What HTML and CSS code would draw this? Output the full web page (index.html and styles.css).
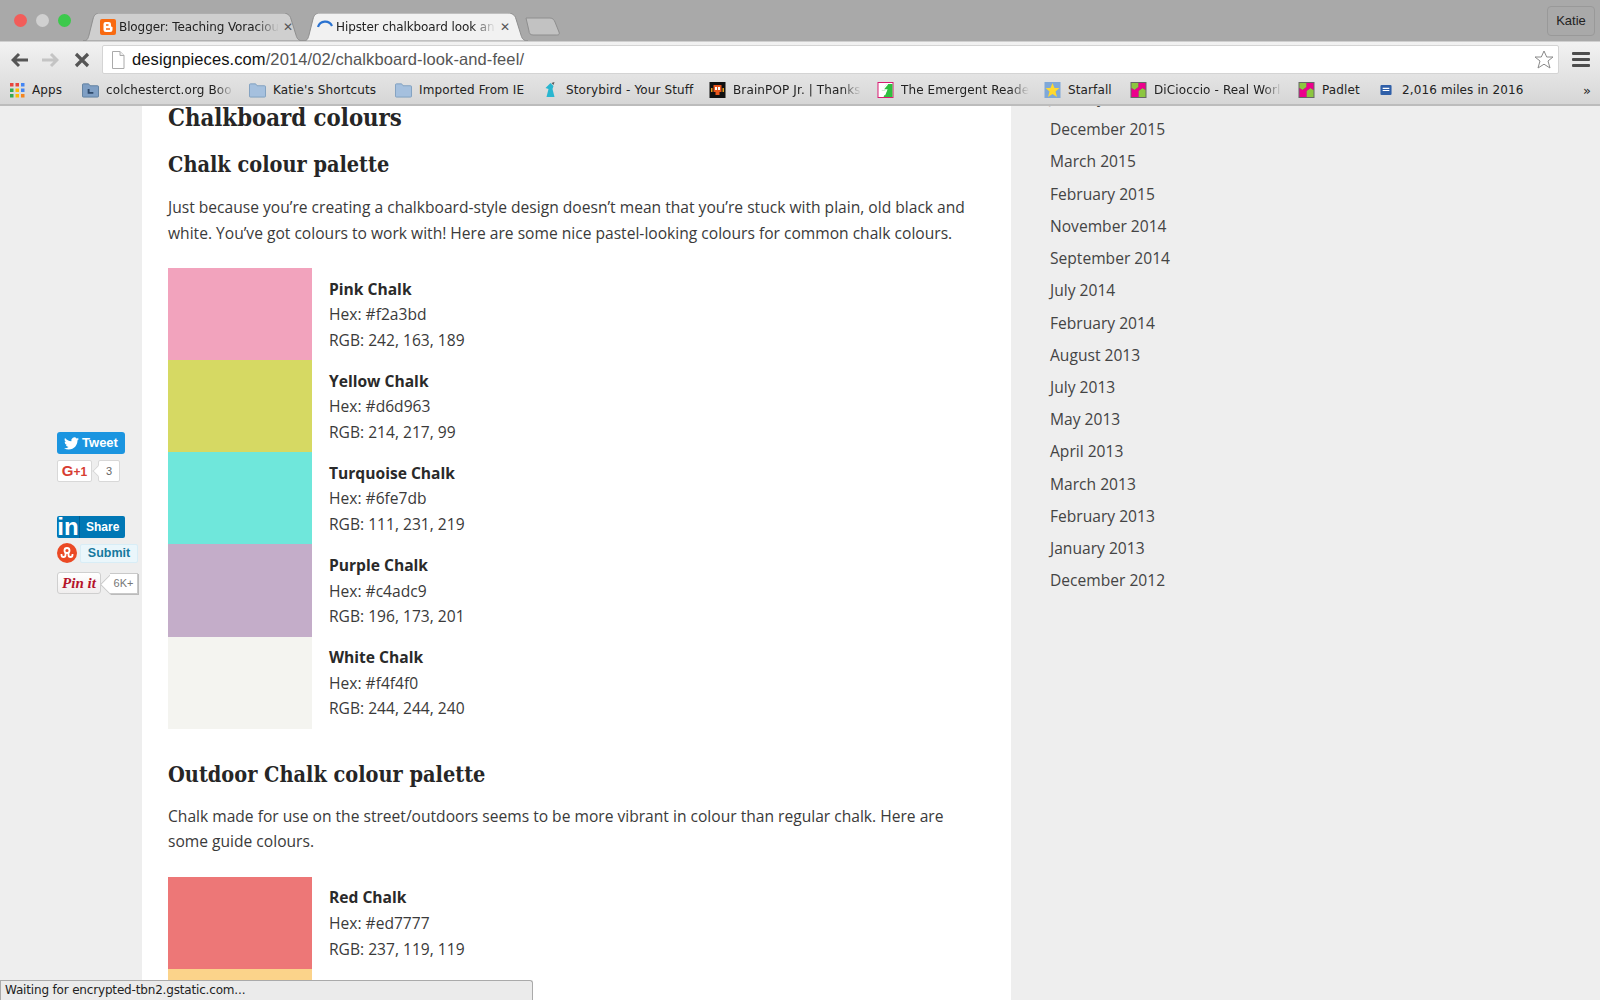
FILE: index.html
```html
<!DOCTYPE html>
<html lang="en">
<head>
<meta charset="utf-8">
<title>Hipster chalkboard look and feel</title>
<link rel="stylesheet" href="styles.css">
</head>
<body>
<header class="chrome">
  <div class="tabstrip">
    <div class="lights"><i class="light red"></i><i class="light grey"></i><i class="light green"></i></div>
    <div class="tab tab-back">
      <svg class="tab-shape" viewBox="0 0 220 28"><path d="M0 28C4 28 5 26 6 22L10 6C11 2 13 0 17 0H200C204 0 207 2 208 6L213 22C214 26 216 28 220 28Z"/></svg>
      <svg class="fav" viewBox="0 0 16 16"><rect width="16" height="16" rx="2" fill="#f96a10"/><path d="M5.500 3H9A2.200 2.200 0 0 1 11 5.500V6.500A1.500 1.500 0 0 0 12.500 8V10.500A2.500 2.500 0 0 1 10 13H6A2.500 2.500 0 0 1 3.500 10.500V5A2 2 0 0 1 5.500 3Z" fill="#fff"/><path d="M6 6H8.500M6 10H10" stroke="#f96a10" stroke-width="1.300"/></svg>
      <span class="tab-title">Blogger: Teaching Voraciou</span>
      <span class="tab-x">✕</span>
    </div>
    <div class="tab tab-active">
      <svg class="tab-shape" viewBox="0 0 225 28"><path d="M0 28C4 28 5 26 6 22L10 6C11 2 13 0 17 0H205C209 0 212 2 213 6L218 22C219 26 221 28 225 28Z"/></svg>
      <svg class="fav" viewBox="0 0 16 16"><path d="M1 8A7.500 7.500 0 0 1 15 7" fill="none" stroke="#2a72d0" stroke-width="2.200"/></svg>
      <span class="tab-title">Hipster chalkboard look an</span>
      <span class="tab-x">✕</span>
    </div>
    <svg class="newtab" viewBox="0 0 35 19"><path d="M1 1H25C28 1 29 3 30 5L34 15C35 18 33 18 31 18H8C5 18 4 16 4 14Z"/></svg>
    <div class="profile">Katie</div>
  </div>
  <div class="toolbar">
    <svg class="nav nav-back" viewBox="0 0 18 16"><path d="M8 2L2 8L8 14M2 8H17" fill="none" stroke="#555" stroke-width="3"/></svg>
    <svg class="nav nav-fwd" viewBox="0 0 18 16"><path d="M10 2L16 8L10 14M16 8H1" fill="none" stroke="#c4c4c4" stroke-width="3"/></svg>
    <svg class="nav nav-stop" viewBox="0 0 16 16"><path d="M2 2L14 14M14 2L2 14" fill="none" stroke="#555" stroke-width="3.200"/></svg>
    <div class="omnibox">
      <svg class="docicon" viewBox="0 0 14 18"><path d="M1.500 .5H9L13 4.500V17.500H1.500Z" fill="#fff" stroke="#aaa"/><path d="M9 .5V4.500H13" fill="#eee" stroke="#aaa"/></svg>
      <span class="url"><b class="host">designpieces.com</b>/2014/02/chalkboard-look-and-feel/</span>
      <svg class="star" viewBox="0 0 20 19"><path d="M10 1L12.700 7H19L14 11L16 18L10 14.200L4 18L6 11L1 7H7.300Z" fill="#fff" stroke="#8a8a8a"/></svg>
    </div>
    <div class="menu"><i></i><i></i><i></i></div>
  </div>
  <div class="bookmarks">
    <div class="bm bm-apps"><svg class="bm-icon" viewBox="0 0 15 15"><g><rect width="3.500" height="3.500" fill="#e8453c"/><rect x="5.500" width="3.500" height="3.500" fill="#e8453c"/><rect x="11" width="3.500" height="3.500" fill="#4285f4"/><rect y="5.500" width="3.500" height="3.500" fill="#34a853"/><rect x="5.500" y="5.500" width="3.500" height="3.500" fill="#fbbc05"/><rect x="11" y="5.500" width="3.500" height="3.500" fill="#4285f4"/><rect y="11" width="3.500" height="3.500" fill="#34a853"/><rect x="5.500" y="11" width="3.500" height="3.500" fill="#fbbc05"/><rect x="11" y="11" width="3.500" height="3.500" fill="#f4851f"/></g></svg><span>Apps</span></div>
    <div class="bm"><svg class="bm-icon" viewBox="0 0 18 16"><path d="M.5 2.500A1 1 0 0 1 1.500 1.500H7L8.500 3.500H16.500A1 1 0 0 1 17.500 4.500V14.500A1 1 0 0 1 16.500 15.500H1.500A1 1 0 0 1 .5 14.500Z" fill="#7f9fc4" stroke="#5f7f9f"/><path d="M6 7H8V10H12V12H6Z" fill="#2f4a6b"/></svg><span class="fade">colchesterct.org Boo</span></div>
    <div class="bm"><svg class="bm-icon" viewBox="0 0 18 16"><path d="M.5 2.500A1 1 0 0 1 1.500 1.500H7L8.500 3.500H16.500A1 1 0 0 1 17.500 4.500V14.500A1 1 0 0 1 16.500 15.500H1.500A1 1 0 0 1 .5 14.500Z" fill="#a5c0de" stroke="#7f9fbf"/></svg><span>Katie's Shortcuts</span></div>
    <div class="bm"><svg class="bm-icon" viewBox="0 0 18 16"><path d="M.5 2.500A1 1 0 0 1 1.500 1.500H7L8.500 3.500H16.500A1 1 0 0 1 17.500 4.500V14.500A1 1 0 0 1 16.500 15.500H1.500A1 1 0 0 1 .5 14.500Z" fill="#a5c0de" stroke="#7f9fbf"/></svg><span>Imported From IE</span></div>
    <div class="bm"><svg class="bm-icon" viewBox="0 0 16 16"><path d="M8 1L11 4L10 7L12 15H4L6 7L3 6Z" fill="#29b6d0"/><path d="M9 1L12 0L11 3Z" fill="#555"/></svg><span>Storybird - Your Stuff</span></div>
    <div class="bm"><svg class="bm-icon" viewBox="0 0 16 16"><rect width="16" height="16" fill="#111"/><path d="M4 3H12V10H10V13H6V10H4Z" fill="#e8551c"/><path d="M1.500 6H3V10H1.500ZM13 6H14.500V10H13Z" fill="#e8a01c"/><path d="M5.500 5H7.500V8H5.500ZM8.500 5H10.500V8H8.500Z" fill="#fff"/></svg><span class="fade">BrainPOP Jr. | Thanks</span></div>
    <div class="bm"><svg class="bm-icon" viewBox="0 0 16 16"><rect width="16" height="16" fill="#d81b72"/><rect x="1" y="1" width="14" height="14" fill="#fff"/><path d="M9 2H15V15H6L9 9H4Z" fill="#2fbf3f"/><path d="M10 2L5 8H9L7 13" fill="none" stroke="#fff" stroke-width="1.500"/></svg><span class="fade">The Emergent Reade</span></div>
    <div class="bm"><svg class="bm-icon" viewBox="0 0 16 16"><rect width="16" height="16" fill="#7fa8d8"/><path d="M8 1L10 6H15L11 9.500L12.500 15L8 12L3.500 15L5 9.500L1 6H6Z" fill="#ffd92e"/></svg><span>Starfall</span></div>
    <div class="bm"><svg class="bm-icon" viewBox="0 0 16 16"><rect width="16" height="16" fill="#666"/><path d="M1 1H8V5L4 8L1 6ZM8 9L12 6L15 8V15H8Z" fill="#8cc63f"/><path d="M8 1H15V8L12 6L8 9ZM1 6L4 8L8 5V15H1Z" fill="#ec008c"/></svg><span class="fade">DiCioccio - Real Worl</span></div>
    <div class="bm"><svg class="bm-icon" viewBox="0 0 16 16"><rect width="16" height="16" fill="#666"/><path d="M1 1H8V5L4 8L1 6ZM8 9L12 6L15 8V15H8Z" fill="#8cc63f"/><path d="M8 1H15V8L12 6L8 9ZM1 6L4 8L8 5V15H1Z" fill="#ec008c"/></svg><span>Padlet</span></div>
    <div class="bm bm-last"><svg class="bm-icon bm-small" viewBox="0 0 10 9"><rect width="10" height="9" rx="1" fill="#2f5fa8"/><path d="M2 3H8M2 5H8" stroke="#fff"/></svg><span>2,016 miles in 2016</span></div>
    <div class="bm-more">»</div>
  </div>
</header>

<div class="page">
  <aside class="rail">
    <div class="share-row"><div class="btn-tweet"><svg class="bird" viewBox="0 0 24 24"><path fill="#fff" d="M23.953 4.570a10 10 0 01-2.825.775 4.958 4.958 0 002.163-2.723c-.951.555-2.005.959-3.127 1.184a4.920 4.920 0 00-8.384 4.482C7.690 8.095 4.067 6.130 1.640 3.162a4.822 4.822 0 00-.666 2.475c0 1.710.870 3.213 2.188 4.096a4.904 4.904 0 01-2.228-.616v.06a4.923 4.923 0 003.946 4.827 4.996 4.996 0 01-2.212.085 4.936 4.936 0 004.604 3.417 9.867 9.867 0 01-6.102 2.105c-.39 0-.779-.023-1.170-.067a13.995 13.995 0 007.557 2.209c9.053 0 13.998-7.496 13.998-13.985 0-.21 0-.42-.015-.63A9.935 9.935 0 0024 4.590z"/></svg>Tweet</div></div>
    <div class="share-row row-gplus"><div class="btn-gplus"><span class="g">G</span>+1</div><div class="count-g">3</div></div>
    <div class="share-row row-in"><div class="btn-in"><span class="in-logo">in</span><span class="in-label">Share</span></div></div>
    <div class="share-row row-su"><svg class="su" viewBox="0 0 20 20"><circle cx="10" cy="10" r="10" fill="#eb4924"/><circle cx="10" cy="7.500" r="2.500" fill="none" stroke="#fff" stroke-width="1.800"/><path d="M4.500 11V12A2 2 0 0 0 8.500 12V10M11.500 10V12A2 2 0 0 0 15.500 12V11" fill="none" stroke="#fff" stroke-width="1.800"/></svg><div class="btn-su">Submit</div></div>
    <div class="share-row row-pin"><div class="btn-pin">Pin it</div><div class="count-pin">6K+</div></div>
  </aside>

  <main class="article">
    <h2 class="h-main">Chalkboard colours</h2>
    <h3 class="h-sub">Chalk colour palette</h3>
    <p class="para">Just because you’re creating a chalkboard-style design doesn’t mean that you’re stuck with plain, old black and white. You’ve got colours to work with! Here are some nice pastel-looking colours for common chalk colours.</p>
    <div class="palette">
      <div class="chalk"><div class="swatch pink"></div><div class="info"><strong>Pink Chalk</strong><span>Hex: #f2a3bd</span><span>RGB: 242, 163, 189</span></div></div>
      <div class="chalk"><div class="swatch yellow"></div><div class="info"><strong>Yellow Chalk</strong><span>Hex: #d6d963</span><span>RGB: 214, 217, 99</span></div></div>
      <div class="chalk"><div class="swatch turquoise"></div><div class="info"><strong>Turquoise Chalk</strong><span>Hex: #6fe7db</span><span>RGB: 111, 231, 219</span></div></div>
      <div class="chalk"><div class="swatch purple"></div><div class="info"><strong>Purple Chalk</strong><span>Hex: #c4adc9</span><span>RGB: 196, 173, 201</span></div></div>
      <div class="chalk"><div class="swatch white"></div><div class="info"><strong>White Chalk</strong><span>Hex: #f4f4f0</span><span>RGB: 244, 244, 240</span></div></div>
    </div>
    <h3 class="h-sub h-outdoor">Outdoor Chalk colour palette</h3>
    <p class="para para-outdoor">Chalk made for use on the street/outdoors seems to be more vibrant in colour than regular chalk. Here are some guide colours.</p>
    <div class="palette">
      <div class="chalk"><div class="swatch red"></div><div class="info"><strong>Red Chalk</strong><span>Hex: #ed7777</span><span>RGB: 237, 119, 119</span></div></div>
      <div class="chalk"><div class="swatch orange"></div></div>
    </div>
  </main>

  <aside class="sidebar">
    <ul class="archive">
      <li>January 2016</li>
      <li>December 2015</li>
      <li>March 2015</li>
      <li>February 2015</li>
      <li>November 2014</li>
      <li>September 2014</li>
      <li>July 2014</li>
      <li>February 2014</li>
      <li>August 2013</li>
      <li>July 2013</li>
      <li>May 2013</li>
      <li>April 2013</li>
      <li>March 2013</li>
      <li>February 2013</li>
      <li>January 2013</li>
      <li>December 2012</li>
    </ul>
  </aside>
</div>
<div class="status">Waiting for encrypted-tbn2.gstatic.com...</div>
</body>
</html>
```
FILE: styles.css
```css
* { box-sizing: border-box; }
html, body { margin: 0; height: 100%; }
body {
  width: 1600px;
  height: 1000px;
  overflow: hidden;
  display: flex;
  flex-direction: column;
  background: #eee;
  font-family: "Open Sans", sans-serif;
  color: #333;
}

/* Browser chrome */
.chrome { flex: none; height: 106px; display: flex; flex-direction: column; }
.tabstrip {
  height: 41px;
  background: #a9a9a9;
  display: flex;
  align-items: flex-end;
  padding-left: 14px;
}
.lights { align-self: flex-start; display: flex; gap: 9px; margin-top: 14px; margin-right: 12px; }
.light { width: 13px; height: 13px; border-radius: 50%; display: block; }
.light.red { background: #f25d5a; }
.light.grey { background: #d0d0d0; }
.light.green { background: #3cc94c; }
.tab {
  position: relative;
  height: 28px;
  display: flex;
  align-items: center;
  font: 12px "DejaVu Sans", sans-serif;
  color: #222;
}
.tab-shape { position: absolute; left: 0; top: 0; width: 100%; height: 100%; }
.tab-back { width: 220px; padding-left: 17px; }
.tab-back .tab-shape path { fill: #cfcfcf; stroke: #8e8e8e; }
.tab-active { width: 225px; padding-left: 14px; }
.tab-active .tab-shape path { fill: #f1f1f1; stroke: #8e8e8e; }
.fav { position: relative; width: 16px; height: 16px; flex: none; margin-right: 3px; }
.tab-title {
  position: relative;
  width: 160px;
  white-space: nowrap;
  overflow: hidden;
  letter-spacing: -0.1px;
  -webkit-mask-image: linear-gradient(to right, #000 85%, transparent);
  mask-image: linear-gradient(to right, #000 85%, transparent);
}
.tab-x { position: relative; font-size: 12px; color: #555; margin-left: 4px; }
.newtab { width: 35px; height: 19px; margin-left: -3px; margin-bottom: 5px; flex: none; }
.newtab path { fill: #c2c2c2; stroke: #8e8e8e; }
.profile {
  margin-left: auto;
  margin-right: 5px;
  align-self: flex-start;
  margin-top: 6px;
  width: 48px;
  height: 30px;
  border: 1px solid #999;
  border-radius: 4px;
  font: 13px/28px "Liberation Sans", sans-serif;
  text-align: center;
  color: #222;
}
.toolbar {
  height: 33px;
  display: flex;
  align-items: center;
  background: linear-gradient(#f2f2f2, #e4e4e4);
  border-top: 1px solid #cfcfcf;
  padding: 3px 0 0 11px;
}
.nav { flex: none; height: 16px; }
.nav-back { width: 18px; }
.nav-fwd { width: 18px; margin-left: 12px; }
.nav-stop { width: 16px; margin-left: 15px; }
.omnibox {
  margin-left: 12px;
  width: 1457px;
  height: 29px;
  background: #fff;
  border: 1px solid #d4d4d4;
  border-radius: 2px;
  display: flex;
  align-items: center;
  padding-left: 8px;
}
.docicon { width: 14px; height: 18px; flex: none; }
.url { margin-left: 7px; font: 16.5px "Liberation Sans", sans-serif; color: #555; white-space: nowrap; letter-spacing: .1px; }
.host { font-weight: normal; color: #111; }
.star { width: 20px; height: 19px; margin-left: auto; margin-right: 4px; }
.menu { margin-left: 13px; width: 18px; display: flex; flex-direction: column; gap: 3px; }
.menu i { display: block; height: 3px; background: #4d4d4d; border-radius: 1px; }
.bookmarks {
  height: 32px;
  display: flex;
  align-items: center;
  padding: 2px 0 0 10px;
  background: linear-gradient(#e4e4e4, #d6d6d6);
  border-bottom: 2px solid #bcbcbc;
  font: 12px "DejaVu Sans", sans-serif;
  letter-spacing: .12px;
  color: #222;
}
.bm { flex: none; display: flex; align-items: center; gap: 7px; white-space: nowrap; }
.bm-icon { width: 17px; height: 16px; flex: none; }
.bm-small { width: 12px; height: 10px; margin: 0 3px 0 0; }
.bm-apps .bm-icon { width: 15px; height: 15px; }
.bm:nth-child(1) { width: 72px; }
.bm:nth-child(2) { width: 167px; }
.bm:nth-child(3) { width: 146px; }
.bm:nth-child(4) { width: 147px; }
.bm:nth-child(5) { width: 167px; }
.bm:nth-child(6) { width: 168px; }
.bm:nth-child(7) { width: 167px; }
.bm:nth-child(8) { width: 86px; }
.bm:nth-child(9) { width: 168px; }
.bm:nth-child(10) { width: 82px; }
.bm-last { width: 200px; }
.fade {
  width: 128px;
  overflow: hidden;
  -webkit-mask-image: linear-gradient(to right, #000 85%, transparent);
  mask-image: linear-gradient(to right, #000 85%, transparent);
}
.bm-more { margin-left: auto; margin-right: 9px; font-size: 13px; }

/* Page */
.page { flex: 1; min-height: 0; display: flex; overflow: hidden; }

.rail {
  flex: none;
  width: 142px;
  padding: 326px 0 0 57px;
  display: flex;
  flex-direction: column;
  font-family: "Liberation Sans", sans-serif;
}
.share-row { display: flex; align-items: center; }
.btn-tweet {
  width: 68px;
  height: 22px;
  background: #1b95e0;
  border-radius: 3px;
  color: #fff;
  font: bold 13px/22px "Liberation Sans", sans-serif;
  display: flex;
  align-items: center;
  justify-content: center;
  gap: 3px;
}
.bird { width: 15px; height: 15px; }
.row-gplus { margin-top: 6px; }
.btn-gplus {
  width: 35px;
  height: 22px;
  background: #fff;
  border: 1px solid #d8d8d8;
  border-radius: 2px;
  color: #d73d32;
  font: bold 12px/20px "Liberation Sans", sans-serif;
  text-align: center;
}
.g { font-size: 15px; }
.count-g {
  position: relative;
  margin-left: 6px;
  width: 22px;
  height: 22px;
  background: #fff;
  border: 1px solid #d8d8d8;
  border-radius: 2px;
  color: #666;
  font-size: 11px;
  line-height: 20px;
  text-align: center;
}
.count-g::before {
  content: "";
  position: absolute;
  left: -5px;
  top: 6px;
  width: 7px;
  height: 7px;
  background: #fff;
  border-left: 1px solid #d8d8d8;
  border-bottom: 1px solid #d8d8d8;
  transform: rotate(45deg);
}
.row-in { margin-top: 34px; }
.btn-in {
  width: 68px;
  height: 22px;
  background: #0077b5;
  border-radius: 2px;
  color: #fff;
  display: flex;
  align-items: center;
}
.in-logo { width: 23px; font: bold 24px/22px "Liberation Sans", sans-serif; text-align: center; border-right: 1px solid #005f92; }
.in-label { margin-left: 6px; font: bold 12px/24px "Liberation Sans", sans-serif; }
.row-su { margin-top: 5px; gap: 3px; }
.su { width: 20px; height: 20px; flex: none; }
.btn-su {
  width: 58px;
  height: 19px;
  background: #eaf6fb;
  border: 1px solid #d8edf6;
  border-radius: 2px;
  color: #17799e;
  font: bold 12.5px/17px "Liberation Sans", sans-serif;
  text-align: center;
}
.row-pin { margin-top: 9px; gap: 2px; }
.btn-pin {
  width: 44px;
  height: 22px;
  background: linear-gradient(#fff, #f0eeee);
  border: 1px solid #cfcfcf;
  border-radius: 3px;
  color: #b5132a;
  font: italic bold 15px/20px "Liberation Serif", serif;
  text-align: center;
}
.count-pin {
  position: relative;
  margin-left: 7px;
  width: 28px;
  height: 21px;
  background: #fff;
  border: 1px solid #c9c9c9;
  border-left: 0;
  box-shadow: 1px 1px 0 #bbb;
  color: #777;
  font-size: 11px;
  line-height: 19px;
  text-align: center;
}
.count-pin::before {
  content: "";
  position: absolute;
  left: -7px;
  top: 3px;
  width: 14px;
  height: 14px;
  background: #fff;
  border-left: 1px solid #c9c9c9;
  border-bottom: 1px solid #c9c9c9;
  transform: rotate(45deg);
  z-index: -1;
}

.article { flex: none; width: 869px; height: 894px; background: #fff; padding-left: 26px; }
.h-main {
  margin: 0;
  font: 700 23.7px/24px "DejaVu Serif", serif;
  font-stretch: condensed;
  color: #262626;
}
.h-sub {
  margin: 0;
  font: 700 21.5px/30px "DejaVu Serif", serif;
  font-stretch: condensed;
  color: #262626;
}
.h-main + .h-sub { margin-top: 20px; }
.para { margin: 15px 0 0; width: 800px; font-size: 15.6px; line-height: 25.6px; color: #3a3a3a; }
.para-outdoor { margin-top: 14px; }
.palette { margin-top: 22px; }
.chalk { display: flex; height: 92.1px; }
.swatch { width: 144px; flex: none; }
.pink { background: #f2a3bd; }
.yellow { background: #d6d963; }
.turquoise { background: #6fe7db; }
.purple { background: #c4adc9; }
.white { background: #f4f4f0; }
.red { background: #ed7777; }
.orange { background: #fbd38a; }
.info {
  display: flex;
  flex-direction: column;
  padding: 8.5px 0 0 17px;
  font-size: 15.6px;
  line-height: 25.6px;
  color: #3a3a3a;
}
.info strong { font-weight: 700; color: #2a2a2a; }
.h-outdoor { margin-top: 31px; }

.sidebar { flex: 1; padding-left: 39px; }
.archive { list-style: none; margin: -25px 0 0; padding: 0; font-size: 15.6px; color: #444; }
.archive li { height: 32.23px; line-height: 32.23px; }

.status {
  position: absolute;
  left: 0;
  top: 980px;
  width: 533px;
  height: 20px;
  background: #ebebeb;
  border: 1px solid #aaa;
  border-bottom: 0;
  border-radius: 0 3px 0 0;
  padding-left: 4px;
  font: 12px/19px "DejaVu Sans", sans-serif;
  letter-spacing: -.17px;
  color: #222;
}
```
